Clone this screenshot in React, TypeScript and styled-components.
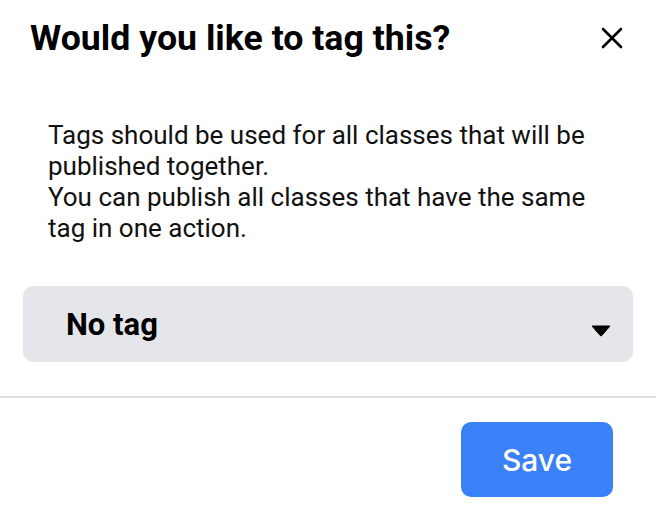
import styled, { createGlobalStyle } from 'styled-components';

const GlobalStyle = createGlobalStyle`
  html, body {
    margin: 0;
    padding: 0;
    background: #ffffff;
  }
  body {
    font-family: Roboto, "Liberation Sans", sans-serif;
  }
`;

const Dialog = styled.div`
  width: 656px;
  height: 516px;
  background: #fff;
  display: flex;
  flex-direction: column;
  box-sizing: border-box;
`;

const Header = styled.div`
  display: flex;
  justify-content: space-between;
  align-items: center;
  padding: 18px 31px 0 30px;
  height: 40px;
`;

const Title = styled.h2`
  margin: 0;
  font-family: Roboto, sans-serif;
  font-size: 35.7px;
  font-weight: 700;
  color: #000;
`;

const CloseButton = styled.button`
  border: none;
  background: none;
  padding: 0;
  width: 26px;
  height: 26px;
  display: flex;
  align-items: center;
  justify-content: center;
  cursor: pointer;
`;

const Body = styled.div`
  padding: 62px 23px 0 23px;
  display: flex;
  flex-direction: column;
  gap: 42px;
`;

const Description = styled.p`
  margin: 0;
  width: 555px;
  padding-left: 25px;
  font-family: Roboto, sans-serif;
  font-size: 26px;
  line-height: 31px;
  color: #111;
`;

const Select = styled.div`
  height: 76px;
  background: #e5e6ea;
  border-radius: 10px;
  display: flex;
  align-items: center;
  justify-content: space-between;
  padding: 0 22px 0 43px;
`;

const SelectValue = styled.span`
  font-family: Roboto, sans-serif;
  font-size: 31px;
  font-weight: 700;
  color: #000;
`;

const Caret = styled.svg`
  margin-top: 14px;
`;

const Divider = styled.hr`
  margin: 34px 0 0 0;
  border: none;
  height: 2px;
  background: #dcdce0;
`;

const Footer = styled.div`
  display: flex;
  justify-content: flex-end;
  padding: 24px 43px 0 0;
`;

const SaveButton = styled.button`
  width: 152px;
  height: 75px;
  border: none;
  border-radius: 10px;
  background: #3a80f6;
  color: #fff;
  font-family: Inter, sans-serif;
  font-size: 30px;
  font-weight: 500;
  cursor: pointer;
`;

const App = () => {
  return (
    <Dialog>
      <GlobalStyle />
      <Header>
        <Title>Would you like to tag this?</Title>
        <CloseButton aria-label="Close">
          <svg width="22" height="22" viewBox="0 0 22 22">
            <path d="M2 2 L20 20 M20 2 L2 20" stroke="#000" strokeWidth="2.6" strokeLinecap="round" />
          </svg>
        </CloseButton>
      </Header>
      <Body>
        <Description>
          Tags should be used for all classes that will be published together.
          <br />
          You can publish all classes that have the same tag in one action.
        </Description>
        <Select>
          <SelectValue>No tag</SelectValue>
          <Caret width="20" height="12" viewBox="0 0 20 12">
            <path d="M1 1 L19 1 L10.8 10.5 Q10 11.3 9.2 10.5 Z" fill="#000" stroke="#000" strokeWidth="1" strokeLinejoin="round" />
          </Caret>
        </Select>
      </Body>
      <Divider />
      <Footer>
        <SaveButton>Save</SaveButton>
      </Footer>
    </Dialog>
  );
};

export default App;
